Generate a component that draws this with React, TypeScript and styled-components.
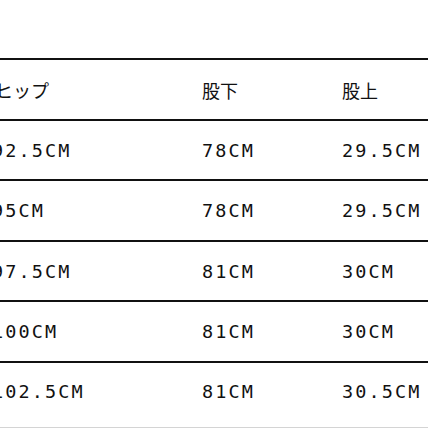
import React from "react";
import styled, { createGlobalStyle } from "styled-components";

const GlobalStyle = createGlobalStyle`
  html, body {
    margin: 0;
    padding: 0;
    background: #ffffff;
    overflow: hidden;
  }
  body {
    width: 428px;
    height: 428px;
  }
`;

const Page = styled.div`
  width: 428px;
  height: 428px;
  overflow: hidden;
  background: #ffffff;
  padding-top: 58px;
  box-sizing: border-box;
`;

const Table = styled.div`
  margin-left: -8px;
  width: 436px;
  border-top: 2px solid #111;
  display: flex;
  flex-direction: column;
`;

const Row = styled.div<{ $last?: boolean }>`
  display: grid;
  grid-template-columns: 210px 140px 1fr;
  align-items: center;
  height: ${(p) => (p.$last ? "65px" : "60.5px")};
  padding-bottom: ${(p) => (p.$last ? "6px" : "0")};
  box-sizing: border-box;
  border-bottom: ${(p) => (p.$last ? "1px solid #d4d4d4" : "2px solid #111")};
`;

const HeadCell = styled.div<{ $indent?: number }>`
  font-family: "Noto Sans CJK JP", "Noto Sans", sans-serif;
  font-size: 18px;
  color: #111;
  line-height: 1;
  white-space: nowrap;
  padding-top: 1px;
  padding-left: ${(p) => p.$indent ?? 0}px;
`;

const Cell = styled.div`
  font-family: "DejaVu Sans Mono", "Liberation Mono", monospace;
  font-size: 18.5px;
  letter-spacing: 2.1px;
  color: #111;
  line-height: 1;
  white-space: nowrap;
  padding-top: 2px;
`;

const rows = [
  ["92.5CM", "78CM", "29.5CM"],
  ["95CM", "78CM", "29.5CM"],
  ["97.5CM", "81CM", "30CM"],
  ["100CM", "81CM", "30CM"],
  ["102.5CM", "81CM", "30.5CM"],
];

export default function App() {
  return (
    <>
      <GlobalStyle />
      <Page>
        <Table>
          <Row>
            <HeadCell $indent={3}>ヒップ</HeadCell>
            <HeadCell>股下</HeadCell>
            <HeadCell>股上</HeadCell>
          </Row>
          {rows.map((r, i) => (
            <Row key={i} $last={i === rows.length - 1}>
              {r.map((v, j) => (
                <Cell key={j}>{v}</Cell>
              ))}
            </Row>
          ))}
        </Table>
      </Page>
    </>
  );
}
